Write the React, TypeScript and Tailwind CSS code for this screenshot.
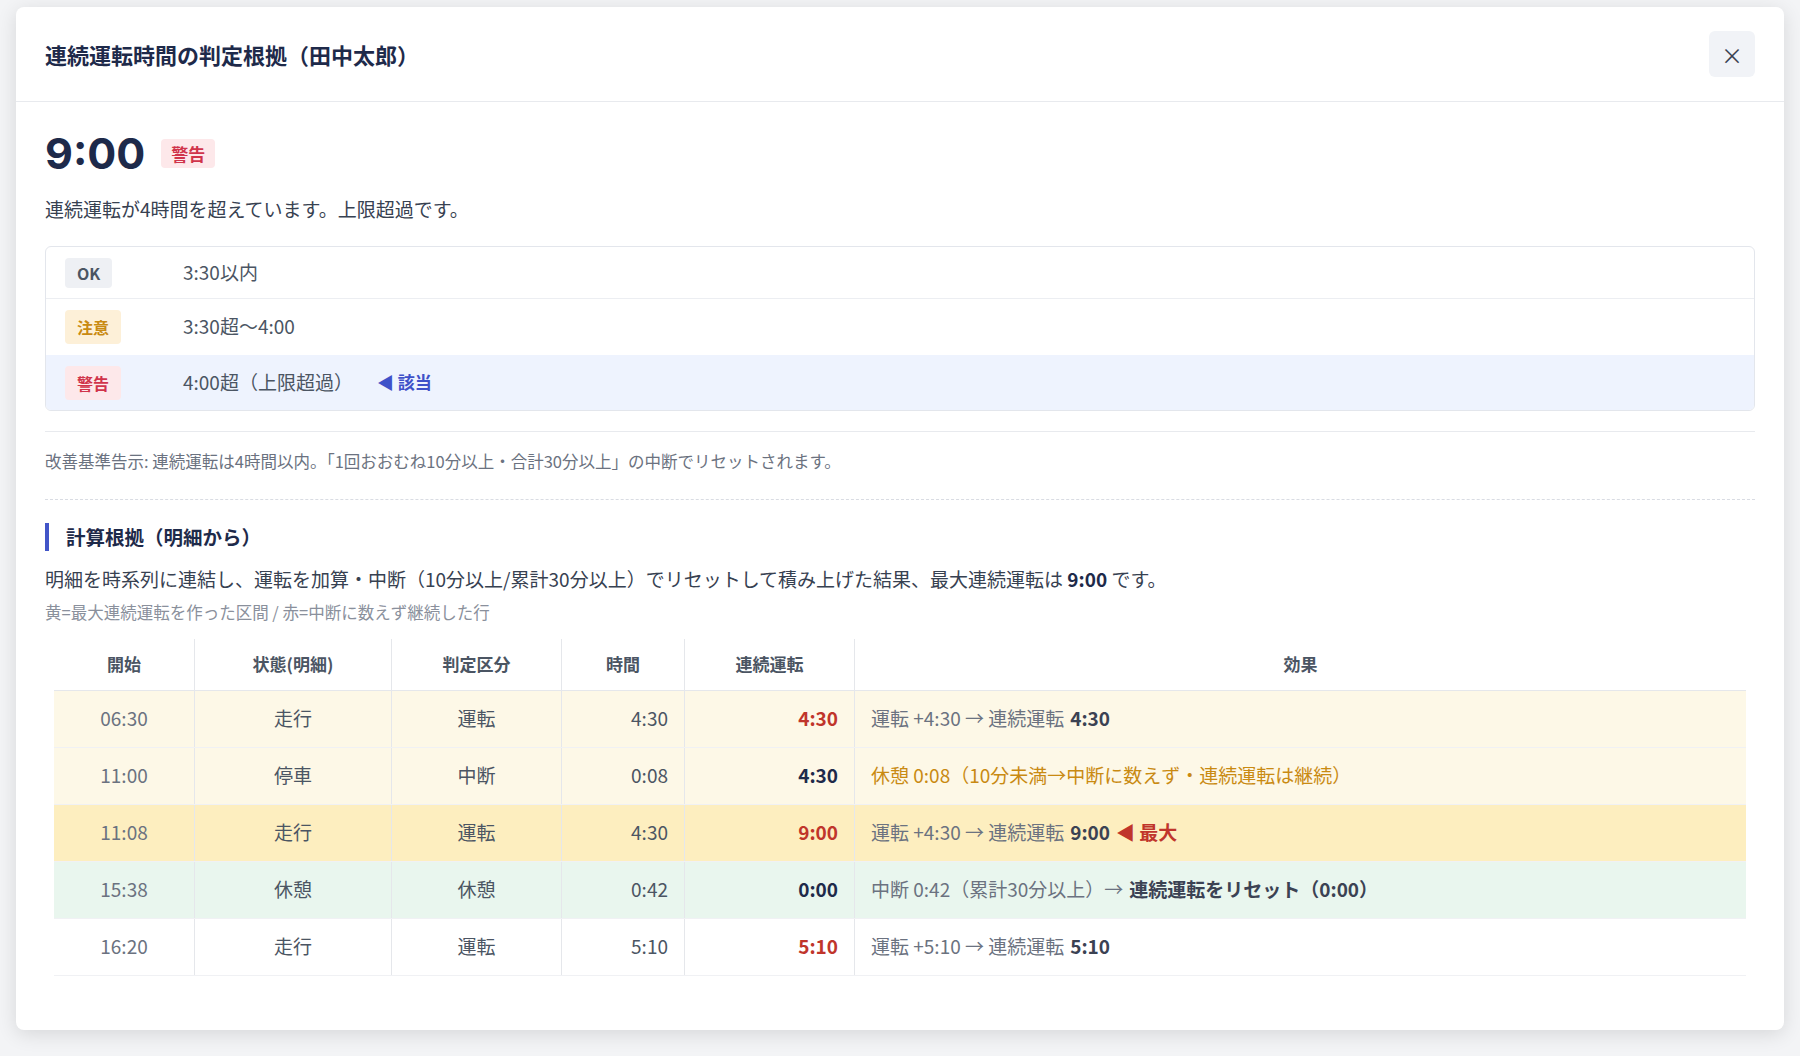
export default function App() {
  const font = { fontFamily: '"Noto Sans CJK JP", "Noto Sans", sans-serif' };
  const rows = [
    { s: '06:30', st: '走行', k: '運転', t: '4:30', c: '4:30', red: true, bg: 'bg-[#fdf8e7]', eff: <>運転 +4:30 → 連続運転<b className="ml-[6px] text-[#3b4253]">4:30</b></> },
    { s: '11:00', st: '停車', k: '中断', t: '0:08', c: '4:30', red: false, bg: 'bg-[#fdf8e7]', eff: <span className="text-[#c98a12]">休憩 0:08（10分未満→中断に数えず・連続運転は継続）</span> },
    { s: '11:08', st: '走行', k: '運転', t: '4:30', c: '9:00', red: true, bg: 'bg-[#fdeebf]', eff: <>運転 +4:30 → 連続運転<b className="ml-[6px] text-[#3b4253]">9:00</b><b className="ml-[6px] text-[#c0352b]">◀ 最大</b></> },
    { s: '15:38', st: '休憩', k: '休憩', t: '0:42', c: '0:00', red: false, bg: 'bg-[#e9f6ee]', eff: <>中断 0:42（累計30分以上）→<b className="ml-[6px] text-[#3b4253]">連続運転をリセット（0:00）</b></> },
    { s: '16:20', st: '走行', k: '運転', t: '5:10', c: '5:10', red: true, bg: 'bg-white', eff: <>運転 +5:10 → 連続運転<b className="ml-[6px] text-[#3b4253]">5:10</b></> },
  ];
  const cols = 'grid grid-cols-[141px_197px_170px_123px_170px_1fr]';
  const cell = 'border-r border-[#e5e7eb] flex items-center';
  return (
    <div className="min-h-[1056px] bg-[#f3f4f6] pt-[7px] px-[16px]" style={font}>
      <div className="bg-white rounded-lg shadow-[0_4px_20px_rgba(0,0,0,0.12)] h-[1023px] w-[1768px]">
        <div className="h-[95px] flex items-center justify-between px-[29px] border-b border-[#e8eaee]">
          <div className="text-[22px] font-bold text-[#1e2a4a]">連続運転時間の判定根拠（田中太郎）</div>
          <div className="w-[46px] h-[46px] rounded-md bg-[#f1f3f7] flex items-center justify-center text-[#3b4253] text-[22px]">×</div>
        </div>
        <div className="px-[29px]">
          <div className="flex items-center gap-[16px] mt-[30px]">
            <div className="text-[43px] font-bold text-[#1e2a4a] leading-none" style={{ fontFamily: 'Inter, sans-serif' }}>9:00</div>
            <span className="bg-[#fde8ea] text-[#d0344b] text-[17px] font-bold px-[10px] py-[2px] rounded">警告</span>
          </div>
          <div className="text-[19px] text-[#374151] mt-[20px]">連続運転が4時間を超えています。上限超過です。</div>
          <div className="mt-[22px] border border-[#e3e6ec] rounded-md overflow-hidden text-[19px] text-[#4b5563]">
            <div className="h-[52px] flex items-center px-[19px] border-b border-[#eceef2]">
              <span className="w-[118px]"><span className="bg-[#eef0f4] text-[#4b5563] font-bold text-[16px] px-[12px] py-[3px] rounded">OK</span></span>
              <span>3:30以内</span>
            </div>
            <div className="h-[56px] flex items-center px-[19px]">
              <span className="w-[118px]"><span className="bg-[#fdf0d8] text-[#c98a12] font-bold text-[16px] px-[12px] py-[5px] rounded">注意</span></span>
              <span>3:30超〜4:00</span>
            </div>
            <div className="h-[55px] flex items-center px-[19px] bg-[#eef3fe]">
              <span className="w-[118px]"><span className="bg-[#fde8ea] text-[#d0344b] font-bold text-[16px] px-[12px] py-[5px] rounded">警告</span></span>
              <span>4:00超（上限超過）</span>
              <span className="ml-[24px] text-[#3f51c9] font-bold text-[17px]">◀ 該当</span>
            </div>
          </div>
          <div className="border-t border-[#e8eaee] mt-[20px]" />
          <div className="text-[16.5px] text-[#6b7280] mt-[17px]">改善基準告示: 連続運転は4時間以内。「1回おおむね10分以上・合計30分以上」の中断でリセットされます。</div>
          <div className="border-t border-dashed border-[#d9dce3] mt-[26px]" />
          <div className="mt-[23px] border-l-[4px] border-[#4255c8] pl-[17px] text-[19.5px] font-bold text-[#1e2a4a] leading-[28px]">計算根拠（明細から）</div>
          <div className="text-[19px] text-[#374151] mt-[14px]">明細を時系列に連結し、運転を加算・中断（10分以上/累計30分以上）でリセットして積み上げた結果、最大連続運転は <b className="text-[#1e2a4a]">9:00</b> です。</div>
          <div className="text-[16.5px] text-[#8a909c] mt-[6px]">黄=最大連続運転を作った区間 / 赤=中断に数えず継続した行</div>
          <div className="mx-[9px] mt-[14px] text-[19px] text-[#4b5563]">
            <div className={`${cols} h-[52px] border-b border-[#e5e7eb] font-bold text-[17px] text-[#4b5563]`}>
              {['開始', '状態(明細)', '判定区分', '時間', '連続運転'].map(h => (
                <div key={h} className={`${cell} justify-center`}>{h}</div>
              ))}
              <div className="flex items-center justify-center">効果</div>
            </div>
            {rows.map(r => (
              <div key={r.s} className={`${cols} h-[57px] border-b border-[#f0f1f4] ${r.bg}`}>
                <div className={`${cell} justify-center text-[#6b7280]`}>{r.s}</div>
                <div className={`${cell} justify-center`}>{r.st}</div>
                <div className={`${cell} justify-center`}>{r.k}</div>
                <div className={`${cell} justify-end pr-[16px]`}>{r.t}</div>
                <div className={`${cell} justify-end pr-[16px] font-bold ${r.red ? 'text-[#c0352b]' : 'text-[#1e2a4a]'}`}>{r.c}</div>
                <div className="flex items-center pl-[16px] text-[#6b7280]">{r.eff}</div>
              </div>
            ))}
          </div>
        </div>
      </div>
    </div>
  );
}
